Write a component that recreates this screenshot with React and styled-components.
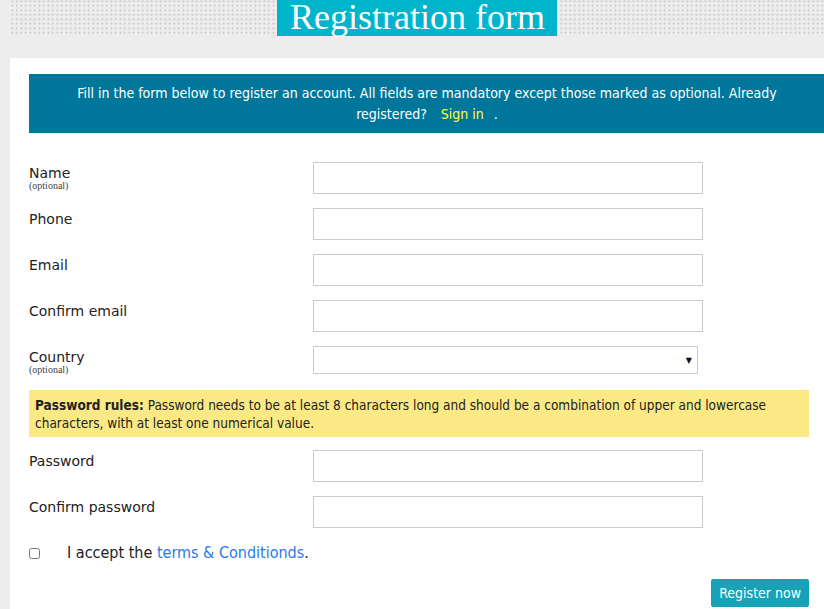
import React from "react";
import styled, { createGlobalStyle } from "styled-components";

const GlobalStyle = createGlobalStyle`
  html, body {
    margin: 0;
    padding: 0;
    background: #ededed;
    overflow-x: hidden;
  }
`;

const narrow = `"Liberation Sans Narrow", "Arial Narrow", "DejaVu Sans Condensed", sans-serif`;

const fields = [
  { label: "Name", optional: true },
  { label: "Phone" },
  { label: "Email" },
  { label: "Confirm email" },
  { label: "Country", optional: true, select: true },
];

const passwordFields = [{ label: "Password" }, { label: "Confirm password" }];

function Field({ label, optional, select }) {
  return (
    <Row>
      <Label>
        {label}
        {optional && <Optional>(optional)</Optional>}
      </Label>
      {select ? (
        <SelectBox>
          <Arrow>▼</Arrow>
        </SelectBox>
      ) : (
        <Input type="text" />
      )}
    </Row>
  );
}

export default function App() {
  return (
    <>
      <GlobalStyle />
      <Header>
        <Title>Registration form</Title>
      </Header>
      <Panel>
        <Banner>
          Fill in the form below to register an account. All fields are
          mandatory except those marked as optional. Already registered?
          <SignIn>Sign in</SignIn>.
        </Banner>
        <Form>
          {fields.map((f) => (
            <Field key={f.label} {...f} />
          ))}
          <Rules>
            <b>Password rules:</b> Password needs to be at least 8 characters
            long and should be a combination of upper and lowercase characters,
            with at least one numerical value.
          </Rules>
          {passwordFields.map((f) => (
            <Field key={f.label} {...f} />
          ))}
          <Accept>
            <Check type="checkbox" />
            <span>
              I accept the <Terms>terms &amp; Conditionds</Terms>.
            </span>
          </Accept>
          <Actions>
            <Button>Register now</Button>
          </Actions>
        </Form>
      </Panel>
    </>
  );
}

const Header = styled.header`
  margin-left: 10px;
  height: 36px;
  display: flex;
  justify-content: center;
  background-image: radial-gradient(circle, #c4c4c4 0.8px, transparent 1.1px);
  background-size: 4.5px 4.5px;
  background-position: 0 -1px;
`;

const Title = styled.h1`
  margin: 0;
  height: 36px;
  padding: 0 12px 0 13px;
  background: #00b4cc;
  color: #fff;
  font-family: "Liberation Serif", "Times New Roman", serif;
  font-weight: normal;
  font-size: 36px;
  line-height: 34px;
  overflow: visible;
`;

const Panel = styled.main`
  margin: 22px 0 0 10px;
  background: #fff;
  padding: 16px 15px 3px 19px;
  min-height: 530px;
  box-sizing: border-box;
`;

const Banner = styled.div`
  margin-right: -40px;
  padding: 9px 50px 8px 26px;
  background: #00779a;
  color: #fff;
  text-align: center;
  font-family: ${narrow};
  font-size: 14px;
  line-height: 21px;
`;

const SignIn = styled.a`
  display: inline-block;
  color: #ffff33;
  margin: 0 10px 0 14px;
  cursor: pointer;
`;

const Form = styled.form`
  margin-top: 29px;
  display: flex;
  flex-direction: column;
`;

const Row = styled.div`
  display: grid;
  grid-template-columns: 284px 390px;
  align-items: start;
  margin-bottom: 14px;
`;

const Label = styled.label`
  padding-top: 3px;
  font-family: "DejaVu Sans", Verdana, sans-serif;
  font-size: 14px;
  line-height: 16px;
  color: #222;
  display: flex;
  flex-direction: column;
`;

const Optional = styled.span`
  font-family: "Liberation Serif", serif;
  font-size: 10px;
  line-height: 10px;
  color: #444;
`;

const Input = styled.input`
  box-sizing: border-box;
  width: 390px;
  height: 32px;
  border: 1px solid #ccc;
  border-radius: 0;
  margin: 0;
  padding: 4px 8px;
`;

const SelectBox = styled.div`
  box-sizing: border-box;
  width: 385px;
  height: 28px;
  border: 1px solid #ccc;
  display: flex;
  align-items: center;
  justify-content: flex-end;
  padding-right: 5px;
`;

const Arrow = styled.span`
  font-family: "DejaVu Sans", sans-serif;
  font-size: 8px;
  color: #111;
`;

const Rules = styled.div`
  margin: 1px 0 13px;
  padding: 6px 6px 5px;
  background: #fbe986;
  color: #222;
  font-family: ${narrow};
  font-size: 13.5px;
  line-height: 18px;
`;

const Accept = styled.div`
  display: flex;
  align-items: center;
  gap: 27px;
  margin-top: 1px;
  font-family: ${narrow};
  font-size: 16px;
  line-height: 20px;
  color: #222;
`;

const Check = styled.input`
  margin: 0;
  width: 11px;
  height: 11px;
`;

const Terms = styled.a`
  color: #2a7ae2;
  cursor: pointer;
`;

const Actions = styled.div`
  display: flex;
  justify-content: flex-end;
  margin-top: 16px;
`;

const Button = styled.button`
  background: #17a2b8;
  color: #fff;
  border: none;
  border-radius: 2px;
  height: 28px;
  padding: 0 8px;
  font-family: ${narrow};
  font-size: 14px;
  cursor: pointer;
`;
